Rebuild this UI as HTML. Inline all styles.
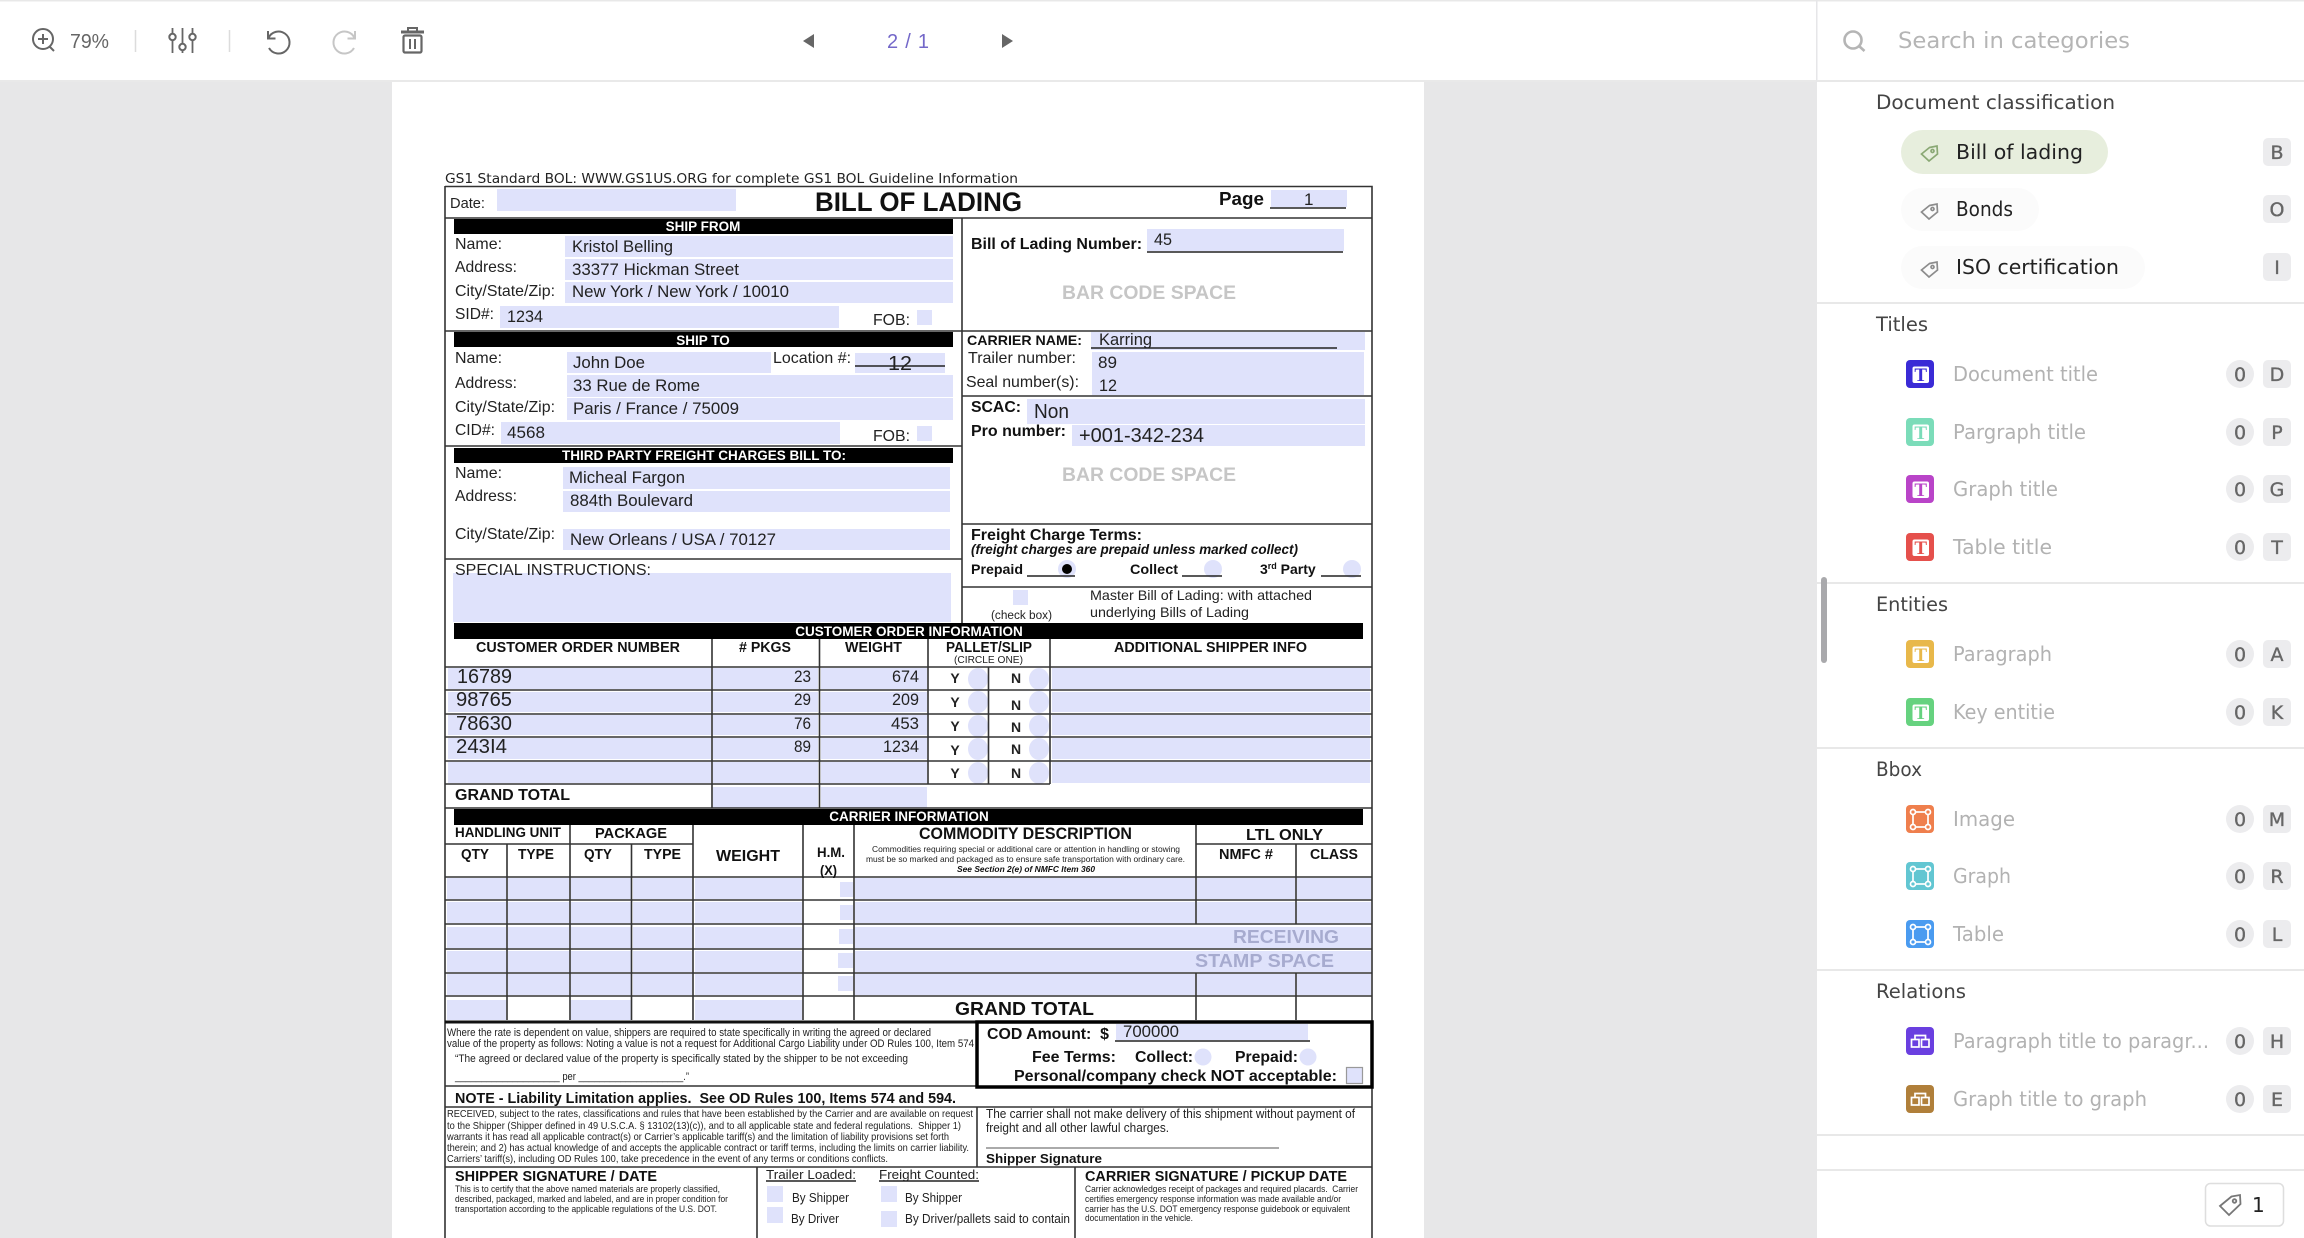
<!DOCTYPE html>
<html><head><meta charset="utf-8"><title>Bill of lading annotation</title>
<style>
html,body{margin:0;padding:0;background:#fff;width:2304px;height:1238px;overflow:hidden}
svg{display:block}
text{font-family:"Liberation Sans",sans-serif;fill:#222}
.b{font-weight:700;fill:#111}
.s{font-family:"DejaVu Sans",sans-serif}
.h{font-size:19.5px;fill:#444}
.m{font-size:20px;fill:#b2b2b2}
.p{font-size:20.5px;fill:#222}
.k{font-size:19px;fill:#666;text-anchor:middle;stroke:#666;stroke-width:.35}
.f{fill:#dfe2fb}
.c{fill:#ececee}
.l{stroke:#333;stroke-width:1.6;fill:none}
.t{font-family:"Liberation Serif",serif;font-weight:700;font-size:19px;text-anchor:middle}
</style></head><body>
<svg width="2304" height="1238" viewBox="0 0 2304 1238" xmlns="http://www.w3.org/2000/svg">
<rect width="2304" height="1238" fill="#e7e7e8"/>
<rect y="0" width="2304" height="81" fill="#fff"/>
<rect y="0" width="2304" height="1.5" fill="#e8e8e8"/>
<rect y="80" width="2304" height="2" fill="#e9e9e9"/>
<rect x="392" y="82" width="1032" height="1156" fill="#fff"/>

<!-- toolbar -->
<g fill="none" stroke="#666" stroke-width="2">
<circle cx="43" cy="39" r="10"/><path d="M38 39h10M43 34v10M49.500 46.500L54 51"/>
<path d="M172.500 28v25M182.500 28v25M192.500 28v25" stroke-width="1.800"/>
<circle cx="172.500" cy="37" r="3.200" fill="#fff"/><circle cx="182.500" cy="47" r="3.200" fill="#fff"/><circle cx="192.500" cy="37" r="3.200" fill="#fff"/>
<path d="M268 31v7.500h7.500M268.500 38A11 11 0 1 1 269 48"/>
<path d="M355 31v7.500h-7.500M354.500 38A11 11 0 1 0 354 48" stroke="#c6c6c6"/>
<path d="M401 32h23" stroke-width="3"/><path d="M408 31v-3h9v3" stroke-width="2"/>
<rect x="403.500" y="35.500" width="18" height="17" rx="1.500" stroke-width="2.200"/><path d="M410 39v10M415 39v10"/>
</g>
<path d="M135.500 30v22M229.500 30v22" stroke="#dcdcdc" stroke-width="1.500"/>
<text x="70" y="48" font-size="20" textLength="39" lengthAdjust="spacingAndGlyphs" style="fill:#666">79%</text>
<polygon points="814,34 814,48 803,41" fill="#666"/>
<polygon points="1002,34 1002,48 1013,41" fill="#666"/>
<text x="887" y="48" font-size="20" textLength="42" lengthAdjust="spacing" style="fill:#7468c9">2 / 1</text>

<!-- document fields -->
<g class="f">
<rect x="497" y="189" width="239" height="22"/><rect x="1271" y="190" width="76" height="17"/>
<rect x="565" y="236" width="388" height="21"/><rect x="565" y="259" width="388" height="21"/><rect x="565" y="282" width="388" height="21"/>
<rect x="500" y="306" width="339" height="22"/><rect x="917" y="310" width="15" height="15"/>
<rect x="567" y="352" width="204" height="21"/><rect x="855" y="353" width="90" height="20"/>
<rect x="567" y="375" width="386" height="22"/><rect x="567" y="398" width="386" height="22"/>
<rect x="501" y="422" width="339" height="22"/><rect x="917" y="426" width="15" height="15"/>
<rect x="563" y="467" width="387" height="22"/><rect x="563" y="491" width="387" height="21"/><rect x="563" y="529" width="387" height="21"/>
<rect x="453" y="573" width="498" height="49"/>
<rect x="1147" y="229" width="197" height="22"/><rect x="1091" y="332" width="274" height="18"/><rect x="1092" y="352" width="272" height="43"/>
<rect x="1027" y="399" width="338" height="25"/><rect x="1072" y="425" width="293" height="21"/>
<circle cx="1067" cy="569" r="9"/><circle cx="1213" cy="569" r="9"/><circle cx="1352" cy="569" r="9"/>
<rect x="1013" y="590" width="15" height="15"/>
</g>
<!-- order table fields -->
<g class="f">
<rect x="448" y="668" width="263" height="21"/><rect x="713" y="668" width="105" height="21"/><rect x="821" y="668" width="106" height="21"/><rect x="1052" y="668" width="318" height="21"/>
<rect x="448" y="692" width="263" height="20"/><rect x="713" y="692" width="105" height="20"/><rect x="821" y="692" width="106" height="20"/><rect x="1052" y="692" width="318" height="20"/>
<rect x="448" y="715" width="263" height="20"/><rect x="713" y="715" width="105" height="20"/><rect x="821" y="715" width="106" height="20"/><rect x="1052" y="715" width="318" height="20"/>
<rect x="448" y="738" width="263" height="21"/><rect x="713" y="738" width="105" height="21"/><rect x="821" y="738" width="106" height="21"/><rect x="1052" y="738" width="318" height="21"/>
<rect x="448" y="762" width="263" height="21"/><rect x="713" y="762" width="105" height="21"/><rect x="821" y="762" width="106" height="21"/><rect x="1052" y="762" width="318" height="21"/>
<rect x="713" y="787" width="105" height="21"/><rect x="821" y="787" width="106" height="21"/>
<ellipse cx="978" cy="679" rx="10" ry="11"/><ellipse cx="1039" cy="679" rx="10" ry="11"/>
<ellipse cx="978" cy="702" rx="10" ry="11"/><ellipse cx="1039" cy="702" rx="10" ry="11"/>
<ellipse cx="978" cy="726" rx="10" ry="11"/><ellipse cx="1039" cy="726" rx="10" ry="11"/>
<ellipse cx="978" cy="749" rx="10" ry="11"/><ellipse cx="1039" cy="749" rx="10" ry="11"/>
<ellipse cx="978" cy="773" rx="10" ry="11"/><ellipse cx="1039" cy="773" rx="10" ry="11"/>
</g>
<!-- carrier fields -->
<g class="f">
<path d="M447 878h59v21h-59zM508 878h61v21h-61zM571 878h60v21h-60zM633 878h59v21h-59zM695 878h107v21h-107zM840 882h13v15h-13zM855 878h340v21h-340zM1197 878h98v21h-98zM1297 878h74v21h-74z"/>
<path d="M447 902h59v21h-59zM508 902h61v21h-61zM571 902h60v21h-60zM633 902h59v21h-59zM695 902h107v21h-107zM840 905h13v15h-13zM855 902h340v21h-340zM1197 902h98v21h-98zM1297 902h74v21h-74z"/>
<path d="M447 927h59v21h-59zM508 927h61v21h-61zM571 927h60v21h-60zM633 927h59v21h-59zM695 927h107v21h-107zM839 929h14v15h-14zM855 927h516v21h-516z"/>
<path d="M447 951h59v21h-59zM508 951h61v21h-61zM571 951h60v21h-60zM633 951h59v21h-59zM695 951h107v21h-107zM838 953h15v15h-15zM855 951h516v21h-516z"/>
<path d="M447 974h59v21h-59zM508 974h61v21h-61zM571 974h60v21h-60zM633 974h59v21h-59zM695 974h107v21h-107zM838 976h15v15h-15zM855 974h340v21h-340zM1197 974h98v21h-98zM1297 974h74v21h-74z"/>
<path d="M447 1000h59v20h-59zM571 1000h60v20h-60zM695 1000h107v20h-107z"/>
<rect x="1116" y="1024" width="192" height="16"/>
<circle cx="1203" cy="1057" r="8.500"/><circle cx="1308" cy="1057" r="8.500"/>
<rect x="767" y="1186" width="16" height="16"/><rect x="767" y="1207" width="16" height="16"/><rect x="881" y="1186" width="16" height="16"/><rect x="881" y="1211" width="16" height="16"/>
</g>

<!-- black bars -->
<g fill="#000">
<rect x="454" y="219" width="499" height="15"/><rect x="454" y="332" width="499" height="15"/><rect x="454" y="448" width="499" height="15"/>
<rect x="454" y="623" width="909" height="16"/><rect x="454" y="809" width="909" height="16"/>
</g>

<!-- document lines -->
<path class="l" d="M445 186.500H1372V1238M445 186V1238M445 218H1372M962 218V623M445 331H1372M445 446H962M445 559H962M962 396H1372M962 524H1372M962 587H1372"/>
<path class="l" d="M712 639V808M819.500 639V808M928 639V784M988.500 667V784M1050 639V784M445 667H1372M445 690H1372M445 714H1372M445 737H1372M445 761H1372M445 784H1050M445 808H1372"/>
<path class="l" d="M507 844V1020M570 825V1020M631.500 844V1020M693 825V1020M803 825V1020M854 825V1020M1196 825V924M1296 844V924M1196 973V1020M1296 973V1020M445 844H693M1196 844H1372M445 877H1372M445 900H1372M445 924H1372M445 949H1372M445 973H1372M445 996H1372"/>
<path d="M445 1022H977" stroke="#111" stroke-width="3"/>
<path class="l" d="M445 1086H977M445 1107H1372M977 1107V1167M445 1167H1372M757 1167V1238M1075 1167V1238"/>
<path d="M986 1148H1279" stroke="#555" stroke-width="1"/>
<rect x="977" y="1022" width="395" height="65" fill="none" stroke="#000" stroke-width="3.500"/>
<rect x="1346.500" y="1067.500" width="16" height="16" fill="#dfe2fb" stroke="#999" stroke-width="1.200"/>
<path stroke="#222" stroke-width="1.600" fill="none" d="M1270 208H1346M1147 252H1343M855 366H945M1091 348H1337M1027 576H1075M1182 576H1222M1321 576H1361M1115 1041H1310M766 1181H856M879 1181H979"/>
<circle cx="1067" cy="569" r="5" fill="#000"/>

<!-- document text -->
<text class="s" x="445" y="183" font-size="13.500" textLength="573" lengthAdjust="spacingAndGlyphs" style="fill:#222">GS1 Standard BOL: WWW.GS1US.ORG for complete GS1 BOL Guideline Information</text>
<text x="450" y="208" font-size="14.500" textLength="35" lengthAdjust="spacingAndGlyphs">Date:</text>
<text class="b" x="815" y="211" font-size="26.500" textLength="207" lengthAdjust="spacingAndGlyphs">BILL OF LADING</text>
<text class="b" x="1219" y="205" font-size="18.500" textLength="45" lengthAdjust="spacingAndGlyphs">Page</text>
<text x="1304" y="205" font-size="17">1</text>
<g font-weight="700" font-size="13.500" style="text-anchor:middle">
<text x="703" y="231" style="fill:#fff">SHIP FROM</text>
<text x="703" y="345" style="fill:#fff">SHIP TO</text>
<text x="704" y="460" style="fill:#fff">THIRD PARTY FREIGHT CHARGES BILL TO:</text>
<text x="909" y="636" style="fill:#fff">CUSTOMER ORDER INFORMATION</text>
<text x="909" y="821" style="fill:#fff">CARRIER INFORMATION</text>
</g>
<g font-size="16">
<text x="455" y="249" textLength="47" lengthAdjust="spacingAndGlyphs">Name:</text>
<text x="455" y="272" textLength="62" lengthAdjust="spacingAndGlyphs">Address:</text>
<text x="455" y="296" textLength="100" lengthAdjust="spacingAndGlyphs">City/State/Zip:</text>
<text x="455" y="319" textLength="39" lengthAdjust="spacingAndGlyphs">SID#:</text>
<text x="873" y="325" textLength="37" lengthAdjust="spacingAndGlyphs">FOB:</text>
<text x="455" y="363" textLength="47" lengthAdjust="spacingAndGlyphs">Name:</text>
<text x="773" y="363" textLength="78" lengthAdjust="spacingAndGlyphs">Location #:</text>
<text x="455" y="388" textLength="62" lengthAdjust="spacingAndGlyphs">Address:</text>
<text x="455" y="412" textLength="100" lengthAdjust="spacingAndGlyphs">City/State/Zip:</text>
<text x="455" y="435" textLength="40" lengthAdjust="spacingAndGlyphs">CID#:</text>
<text x="873" y="441" textLength="37" lengthAdjust="spacingAndGlyphs">FOB:</text>
<text x="455" y="478" textLength="47" lengthAdjust="spacingAndGlyphs">Name:</text>
<text x="455" y="501" textLength="62" lengthAdjust="spacingAndGlyphs">Address:</text>
<text x="455" y="539" textLength="100" lengthAdjust="spacingAndGlyphs">City/State/Zip:</text>
<text x="455" y="575" textLength="196" lengthAdjust="spacingAndGlyphs">SPECIAL INSTRUCTIONS:</text>
<text x="968" y="363" textLength="108" lengthAdjust="spacingAndGlyphs">Trailer number:</text>
<text x="966" y="387" textLength="113" lengthAdjust="spacingAndGlyphs">Seal number(s):</text>
</g>
<g font-size="17">
<text x="572" y="252" textLength="101" lengthAdjust="spacingAndGlyphs">Kristol Belling</text>
<text x="572" y="275" textLength="167" lengthAdjust="spacingAndGlyphs">33377 Hickman Street</text>
<text x="572" y="297" textLength="217" lengthAdjust="spacingAndGlyphs">New York / New York / 10010</text>
<text x="507" y="322" textLength="36" lengthAdjust="spacingAndGlyphs">1234</text>
<text x="573" y="368" textLength="72" lengthAdjust="spacingAndGlyphs">John Doe</text>
<text x="888" y="370" font-size="20" textLength="24" lengthAdjust="spacingAndGlyphs">12</text>
<text x="573" y="391" textLength="127" lengthAdjust="spacingAndGlyphs">33 Rue de Rome</text>
<text x="573" y="414" textLength="166" lengthAdjust="spacingAndGlyphs">Paris / France / 75009</text>
<text x="507" y="438" textLength="38" lengthAdjust="spacingAndGlyphs">4568</text>
<text x="569" y="483" textLength="116" lengthAdjust="spacingAndGlyphs">Micheal Fargon</text>
<text x="570" y="506" textLength="123" lengthAdjust="spacingAndGlyphs">884th Boulevard</text>
<text x="570" y="545" textLength="206" lengthAdjust="spacingAndGlyphs">New Orleans / USA / 70127</text>
<text x="1154" y="245" textLength="18" lengthAdjust="spacingAndGlyphs">45</text>
<text x="1099" y="345" textLength="53" lengthAdjust="spacingAndGlyphs">Karring</text>
<text x="1098" y="368" textLength="19" lengthAdjust="spacingAndGlyphs">89</text>
<text x="1099" y="391" textLength="18" lengthAdjust="spacingAndGlyphs">12</text>
<text x="1034" y="418" font-size="20" textLength="35" lengthAdjust="spacingAndGlyphs">Non</text>
<text x="1079" y="442" font-size="20" textLength="125" lengthAdjust="spacingAndGlyphs">+001-342-234</text>
<text x="1123" y="1037" textLength="56" lengthAdjust="spacingAndGlyphs">700000</text>
</g>
<g class="b" font-weight="700">
<text class="b" x="971" y="249" font-size="16" textLength="171" lengthAdjust="spacingAndGlyphs">Bill of Lading Number:</text>
<text class="b" x="967" y="345" font-size="14" textLength="115" lengthAdjust="spacingAndGlyphs">CARRIER NAME:</text>
<text class="b" x="971" y="412" font-size="16" textLength="50" lengthAdjust="spacingAndGlyphs">SCAC:</text>
<text class="b" x="971" y="436" font-size="16" textLength="95" lengthAdjust="spacingAndGlyphs">Pro number:</text>
<text class="b" x="971" y="540" font-size="16" textLength="171" lengthAdjust="spacingAndGlyphs">Freight Charge Terms:</text>
<text class="b" x="971" y="554" font-size="13.500" font-style="italic" textLength="327" lengthAdjust="spacingAndGlyphs">(freight charges are prepaid unless marked collect)</text>
<text class="b" x="971" y="574" font-size="14" textLength="52" lengthAdjust="spacingAndGlyphs">Prepaid</text>
<text class="b" x="1130" y="574" font-size="14" textLength="48" lengthAdjust="spacingAndGlyphs">Collect</text>
<text class="b" x="1260" y="574" font-size="14">3<tspan font-size="9" dy="-5">rd</tspan><tspan dy="5"> Party</tspan></text>
<text class="b" x="1062" y="299" font-size="19" textLength="174" lengthAdjust="spacingAndGlyphs" style="fill:#c6c6c6">BAR CODE SPACE</text>
<text class="b" x="1062" y="481" font-size="19" textLength="174" lengthAdjust="spacingAndGlyphs" style="fill:#c6c6c6">BAR CODE SPACE</text>
</g>
<text x="991" y="619" font-size="11.500" textLength="61" lengthAdjust="spacingAndGlyphs">(check box)</text>
<text x="1090" y="600" font-size="14" textLength="222" lengthAdjust="spacingAndGlyphs">Master Bill of Lading: with attached</text>
<text x="1090" y="617" font-size="14" textLength="159" lengthAdjust="spacingAndGlyphs">underlying Bills of Lading</text>

<!-- order table text -->
<g class="b">
<text class="b" x="476" y="652" font-size="14.500" textLength="204" lengthAdjust="spacingAndGlyphs">CUSTOMER ORDER NUMBER</text>
<text class="b" x="739" y="652" font-size="14.500" textLength="52" lengthAdjust="spacingAndGlyphs"># PKGS</text>
<text class="b" x="845" y="652" font-size="14.500" textLength="57" lengthAdjust="spacingAndGlyphs">WEIGHT</text>
<text class="b" x="946" y="652" font-size="14.500" textLength="86" lengthAdjust="spacingAndGlyphs">PALLET/SLIP</text>
<text class="b" x="1114" y="652" font-size="14.500" textLength="193" lengthAdjust="spacingAndGlyphs">ADDITIONAL SHIPPER INFO</text>
<text class="b" x="455" y="800" font-size="16" textLength="115" lengthAdjust="spacingAndGlyphs">GRAND TOTAL</text>
</g>
<text x="954" y="663" font-size="10" textLength="69" lengthAdjust="spacingAndGlyphs">(CIRCLE ONE)</text>
<g font-size="20">
<text x="457" y="683" textLength="55" lengthAdjust="spacingAndGlyphs">16789</text>
<text x="456" y="706" textLength="56" lengthAdjust="spacingAndGlyphs">98765</text>
<text x="456" y="730" textLength="56" lengthAdjust="spacingAndGlyphs">78630</text>
<text x="456" y="753" textLength="51" lengthAdjust="spacingAndGlyphs">243I4</text>
</g>
<g font-size="16.500" style="text-anchor:end">
<text x="811" y="682" textLength="17" lengthAdjust="spacingAndGlyphs">23</text><text x="811" y="705" textLength="17" lengthAdjust="spacingAndGlyphs">29</text><text x="811" y="729" textLength="17" lengthAdjust="spacingAndGlyphs">76</text><text x="811" y="752" textLength="17" lengthAdjust="spacingAndGlyphs">89</text>
<text x="919" y="682" textLength="27" lengthAdjust="spacingAndGlyphs">674</text><text x="919" y="705" textLength="27" lengthAdjust="spacingAndGlyphs">209</text><text x="919" y="729" textLength="28" lengthAdjust="spacingAndGlyphs">453</text><text x="919" y="752" textLength="36" lengthAdjust="spacingAndGlyphs">1234</text>
</g>
<g font-size="14" font-weight="700" style="text-anchor:middle">
<text x="955" y="683">Y</text><text x="1016" y="683">N</text>
<text x="955" y="707">Y</text><text x="1016" y="710">N</text>
<text x="955" y="731">Y</text><text x="1016" y="732">N</text>
<text x="955" y="755">Y</text><text x="1016" y="754">N</text>
<text x="955" y="778">Y</text><text x="1016" y="778">N</text>
</g>

<!-- carrier text -->
<g>
<text class="b" x="455" y="837" font-size="14" textLength="106" lengthAdjust="spacingAndGlyphs">HANDLING UNIT</text>
<text class="b" x="595" y="838" font-size="15" textLength="72" lengthAdjust="spacingAndGlyphs">PACKAGE</text>
<text class="b" x="919" y="839" font-size="16.500" textLength="213" lengthAdjust="spacingAndGlyphs">COMMODITY DESCRIPTION</text>
<text class="b" x="1246" y="840" font-size="16" textLength="77" lengthAdjust="spacingAndGlyphs">LTL ONLY</text>
<text class="b" x="461" y="859" font-size="14.500" textLength="28" lengthAdjust="spacingAndGlyphs">QTY</text>
<text class="b" x="518" y="859" font-size="14.500" textLength="36" lengthAdjust="spacingAndGlyphs">TYPE</text>
<text class="b" x="584" y="859" font-size="14.500" textLength="28" lengthAdjust="spacingAndGlyphs">QTY</text>
<text class="b" x="644" y="859" font-size="14.500" textLength="37" lengthAdjust="spacingAndGlyphs">TYPE</text>
<text class="b" x="716" y="861" font-size="16" textLength="64" lengthAdjust="spacingAndGlyphs">WEIGHT</text>
<text class="b" x="817" y="857" font-size="14" textLength="28" lengthAdjust="spacingAndGlyphs">H.M.</text>
<text class="b" x="820" y="875" font-size="14" textLength="17" lengthAdjust="spacingAndGlyphs">(X)</text>
<text class="b" x="1219" y="859" font-size="14.500" textLength="54" lengthAdjust="spacingAndGlyphs">NMFC #</text>
<text class="b" x="1310" y="859" font-size="14.500" textLength="48" lengthAdjust="spacingAndGlyphs">CLASS</text>
<text x="872" y="852" font-size="8.500" textLength="308" lengthAdjust="spacingAndGlyphs">Commodities requiring special or additional care or attention in handling or stowing</text>
<text x="866" y="862" font-size="8.500" textLength="319" lengthAdjust="spacingAndGlyphs">must be so marked and packaged as to ensure safe transportation with ordinary care.</text>
<text class="b" x="957" y="872" font-size="8.500" font-style="italic" textLength="138" lengthAdjust="spacingAndGlyphs">See Section 2(e) of NMFC Item 360</text>
<text class="b" x="1233" y="943" font-size="18" textLength="106" lengthAdjust="spacingAndGlyphs" style="fill:#a7abcf">RECEIVING</text>
<text class="b" x="1195" y="967" font-size="18" textLength="139" lengthAdjust="spacingAndGlyphs" style="fill:#a7abcf">STAMP SPACE</text>
<text class="b" x="955" y="1015" font-size="18.500" textLength="139" lengthAdjust="spacingAndGlyphs">GRAND TOTAL</text>
</g>

<!-- bottom text -->
<g font-size="11">
<text x="447" y="1036" textLength="484" lengthAdjust="spacingAndGlyphs">Where the rate is dependent on value, shippers are required to state specifically in writing the agreed or declared</text>
<text x="447" y="1047" textLength="527" lengthAdjust="spacingAndGlyphs">value of the property as follows: Noting a value is not a request for Additional Cargo Liability under OD Rules 100, Item 574</text>
<text x="455" y="1062" textLength="453" lengthAdjust="spacingAndGlyphs">“The agreed or declared value of the property is specifically stated by the shipper to be not exceeding</text>
<text x="455" y="1080" textLength="234" lengthAdjust="spacingAndGlyphs">____________________ per ____________________.”</text>
</g>
<g font-size="10.500">
<text x="447" y="1117" textLength="526" lengthAdjust="spacingAndGlyphs">RECEIVED, subject to the rates, classifications and rules that have been established by the Carrier and are available on request</text>
<text x="447" y="1129" textLength="514" lengthAdjust="spacingAndGlyphs">to the Shipper (Shipper defined in 49 U.S.C.A. § 13102(13)(c)), and to all applicable state and federal regulations.&#160; Shipper 1)</text>
<text x="447" y="1140" textLength="502" lengthAdjust="spacingAndGlyphs">warrants it has read all applicable contract(s) or Carrier’s applicable tariff(s) and the limitation of liability provisions set forth</text>
<text x="447" y="1151" textLength="522" lengthAdjust="spacingAndGlyphs">therein; and 2) has actual knowledge of and accepts the applicable contract or tariff terms, including the limits on carrier liability.</text>
<text x="447" y="1162" textLength="441" lengthAdjust="spacingAndGlyphs">Carriers’ tariff(s), including OD Rules 100, take precedence in the event of any terms or conditions conflicts.</text>
</g>
<text class="b" x="987" y="1039" font-size="16" textLength="122" lengthAdjust="spacingAndGlyphs">COD Amount:&#160; $</text>
<text class="b" x="1032" y="1062" font-size="16" textLength="84" lengthAdjust="spacingAndGlyphs">Fee Terms:</text>
<text class="b" x="1135" y="1062" font-size="16" textLength="58" lengthAdjust="spacingAndGlyphs">Collect:</text>
<text class="b" x="1235" y="1062" font-size="16" textLength="63" lengthAdjust="spacingAndGlyphs">Prepaid:</text>
<text class="b" x="1014" y="1081" font-size="16" textLength="323" lengthAdjust="spacingAndGlyphs">Personal/company check NOT acceptable:</text>
<text class="b" x="455" y="1103" font-size="14.500" textLength="501" lengthAdjust="spacingAndGlyphs">NOTE - Liability Limitation applies.&#160; See OD Rules 100, Items 574 and 594.</text>
<text x="986" y="1118" font-size="13" textLength="369" lengthAdjust="spacingAndGlyphs">The carrier shall not make delivery of this shipment without payment of</text>
<text x="986" y="1132" font-size="13" textLength="183" lengthAdjust="spacingAndGlyphs">freight and all other lawful charges.</text>
<text class="b" x="986" y="1163" font-size="13" textLength="116" lengthAdjust="spacingAndGlyphs">Shipper Signature</text>
<text class="b" x="455" y="1181" font-size="14.500" textLength="202" lengthAdjust="spacingAndGlyphs">SHIPPER SIGNATURE / DATE</text>
<text x="455" y="1192" font-size="9" textLength="265" lengthAdjust="spacingAndGlyphs">This is to certify that the above named materials are properly classified,</text>
<text x="455" y="1202" font-size="9" textLength="273" lengthAdjust="spacingAndGlyphs">described, packaged, marked and labeled, and are in proper condition for</text>
<text x="455" y="1212" font-size="9" textLength="262" lengthAdjust="spacingAndGlyphs">transportation according to the applicable regulations of the U.S. DOT.</text>
<text x="766" y="1179" font-size="13" textLength="90" lengthAdjust="spacingAndGlyphs">Trailer Loaded:</text>
<text x="879" y="1179" font-size="13" textLength="100" lengthAdjust="spacingAndGlyphs">Freight Counted:</text>
<text x="792" y="1202" font-size="12.500" textLength="57" lengthAdjust="spacingAndGlyphs">By Shipper</text>
<text x="791" y="1223" font-size="12.500" textLength="48" lengthAdjust="spacingAndGlyphs">By Driver</text>
<text x="905" y="1202" font-size="12.500" textLength="57" lengthAdjust="spacingAndGlyphs">By Shipper</text>
<text x="905" y="1223" font-size="12.500" textLength="165" lengthAdjust="spacingAndGlyphs">By Driver/pallets said to contain</text>
<text class="b" x="1085" y="1181" font-size="14.500" textLength="262" lengthAdjust="spacingAndGlyphs">CARRIER SIGNATURE / PICKUP DATE</text>
<text x="1085" y="1192" font-size="9" textLength="273" lengthAdjust="spacingAndGlyphs">Carrier acknowledges receipt of packages and required placards.&#160; Carrier</text>
<text x="1085" y="1202" font-size="9" textLength="256" lengthAdjust="spacingAndGlyphs">certifies emergency response information was made available and/or</text>
<text x="1085" y="1212" font-size="9" textLength="265" lengthAdjust="spacingAndGlyphs">carrier has the U.S. DOT emergency response guidebook or equivalent</text>
<text x="1085" y="1221" font-size="9" textLength="108" lengthAdjust="spacingAndGlyphs">documentation in the vehicle.</text>

<!-- sidebar -->
<rect x="1817" y="1.500" width="487" height="1236.500" fill="#fff"/>
<rect x="1816" y="0" width="1.500" height="82" fill="#e6e6e8"/>
<g fill="#e8e8e8">
<rect x="1817" y="80" width="487" height="2"/><rect x="1817" y="302" width="487" height="2"/><rect x="1817" y="582" width="487" height="2"/><rect x="1817" y="747" width="487" height="2"/><rect x="1817" y="969" width="487" height="2"/><rect x="1817" y="1134" width="487" height="2"/><rect x="1817" y="1169" width="487" height="2"/>
</g>
<rect x="1821" y="577" width="6" height="86" rx="3" fill="#a9a9ac"/>
<g fill="none" stroke="#b5b5b5" stroke-width="2.600"><circle cx="1853" cy="40" r="8.500"/><path d="M1859 46L1864.500 51"/></g>
<text class="s" x="1898" y="48" font-size="22" textLength="232" lengthAdjust="spacingAndGlyphs" style="fill:#b5b5b5">Search in categories</text>

<text class="s h" x="1876" y="109" textLength="239" lengthAdjust="spacingAndGlyphs">Document classification</text>
<rect x="1901" y="130" width="207" height="44" rx="22" fill="#e7eedd"/>
<rect x="1901" y="188" width="138" height="43" rx="21.500" fill="#fbfbfb"/>
<rect x="1901" y="246" width="244" height="43" rx="21.500" fill="#fbfbfb"/>
<g fill="none" stroke-width="1.700">
<g stroke="#8aa874"><path d="M1929.500 147.500L1937 146l.5 8-8.500 7-7.500-7z"/><circle cx="1932.500" cy="151" r="1.500"/></g>
<g stroke="#8c8c8c"><path d="M1929.500 205.500L1937 204l.5 8-8.500 7-7.500-7z"/><circle cx="1932.500" cy="209" r="1.500"/></g>
<g stroke="#8c8c8c"><path d="M1929.500 263.500L1937 262l.5 8-8.500 7-7.500-7z"/><circle cx="1932.500" cy="267" r="1.500"/></g>
</g>
<text class="s p" x="1956" y="159" textLength="127" lengthAdjust="spacingAndGlyphs">Bill of lading</text>
<text class="s p" x="1956" y="216" textLength="57" lengthAdjust="spacingAndGlyphs">Bonds</text>
<text class="s p" x="1956" y="274" textLength="163" lengthAdjust="spacingAndGlyphs">ISO certification</text>
<rect class="c" x="2263" y="138" width="28" height="28" rx="5"/><text class="s k" x="2277" y="159">B</text>
<rect class="c" x="2263" y="195" width="28" height="28" rx="5"/><text class="s k" x="2277" y="216">O</text>
<rect class="c" x="2263" y="253" width="28" height="28" rx="5"/><text class="s k" x="2277" y="274">I</text>

<text class="s h" x="1876" y="331" textLength="52" lengthAdjust="spacingAndGlyphs">Titles</text>
<text class="s h" x="1876" y="611" textLength="72" lengthAdjust="spacingAndGlyphs">Entities</text>
<text class="s h" x="1876" y="776" textLength="46" lengthAdjust="spacingAndGlyphs">Bbox</text>
<text class="s h" x="1876" y="998" textLength="90" lengthAdjust="spacingAndGlyphs">Relations</text>

<!-- T rows -->
<g transform="translate(1906,360)"><rect width="28" height="28" rx="4" fill="#3a2bd6"/><rect x="6.500" y="6.500" width="16.500" height="16.500" rx="2" fill="#fff"/><text class="t" x="14.700" y="21" style="fill:#3a2bd6">T</text></g>
<g transform="translate(1906,418)"><rect width="28" height="28" rx="4" fill="#7bdcb9"/><rect x="6.500" y="6.500" width="16.500" height="16.500" rx="2" fill="#fff"/><text class="t" x="14.700" y="21" style="fill:#7bdcb9">T</text></g>
<g transform="translate(1906,475)"><rect width="28" height="28" rx="4" fill="#b944c8"/><rect x="6.500" y="6.500" width="16.500" height="16.500" rx="2" fill="#fff"/><text class="t" x="14.700" y="21" style="fill:#b944c8">T</text></g>
<g transform="translate(1906,533)"><rect width="28" height="28" rx="4" fill="#e5504c"/><rect x="6.500" y="6.500" width="16.500" height="16.500" rx="2" fill="#fff"/><text class="t" x="14.700" y="21" style="fill:#e5504c">T</text></g>
<g transform="translate(1906,640)"><rect width="28" height="28" rx="4" fill="#e8b84a"/><rect x="6.500" y="6.500" width="16.500" height="16.500" rx="2" fill="#fff"/><text class="t" x="14.700" y="21" style="fill:#e8b84a">T</text></g>
<g transform="translate(1906,698)"><rect width="28" height="28" rx="4" fill="#66d27f"/><rect x="6.500" y="6.500" width="16.500" height="16.500" rx="2" fill="#fff"/><text class="t" x="14.700" y="21" style="fill:#66d27f">T</text></g>

<!-- bbox icons -->
<g transform="translate(1906,805)"><rect width="28" height="28" rx="4" fill="#ef7f4d"/><g fill="#ef7f4d" stroke="#fff" stroke-width="1.700"><rect x="7" y="7" width="15" height="15" fill="none"/><circle cx="7" cy="7" r="2.500"/><circle cx="22" cy="7" r="2.500"/><circle cx="7" cy="22" r="2.500"/><circle cx="22" cy="22" r="2.500"/></g></g>
<g transform="translate(1906,862)"><rect width="28" height="28" rx="4" fill="#62c6d2"/><g fill="#62c6d2" stroke="#fff" stroke-width="1.700"><rect x="7" y="7" width="15" height="15" fill="none"/><circle cx="7" cy="7" r="2.500"/><circle cx="22" cy="7" r="2.500"/><circle cx="7" cy="22" r="2.500"/><circle cx="22" cy="22" r="2.500"/></g></g>
<g transform="translate(1906,920)"><rect width="28" height="28" rx="4" fill="#4a9bf0"/><g fill="#4a9bf0" stroke="#fff" stroke-width="1.700"><rect x="7" y="7" width="15" height="15" fill="none"/><circle cx="7" cy="7" r="2.500"/><circle cx="22" cy="7" r="2.500"/><circle cx="7" cy="22" r="2.500"/><circle cx="22" cy="22" r="2.500"/></g></g>

<!-- relation icons -->
<g transform="translate(1906,1027)"><rect width="28" height="28" rx="4" fill="#6a3fe0"/><g fill="none" stroke="#fff" stroke-width="1.700"><rect x="5.500" y="12.500" width="7.500" height="7.500"/><rect x="15.500" y="12.500" width="7.500" height="7.500"/><path d="M9 12.500V8.500H19.500V12.500"/></g></g>
<g transform="translate(1906,1085)"><rect width="28" height="28" rx="4" fill="#b07f3a"/><g fill="none" stroke="#fff" stroke-width="1.700"><rect x="5.500" y="12.500" width="7.500" height="7.500"/><rect x="15.500" y="12.500" width="7.500" height="7.500"/><path d="M9 12.500V8.500H19.500V12.500"/></g></g>

<!-- labels -->
<text class="s m" x="1953" y="381" textLength="145" lengthAdjust="spacingAndGlyphs">Document title</text>
<text class="s m" x="1953" y="439" textLength="133" lengthAdjust="spacingAndGlyphs">Pargraph title</text>
<text class="s m" x="1953" y="496" textLength="105" lengthAdjust="spacingAndGlyphs">Graph title</text>
<text class="s m" x="1953" y="554" textLength="99" lengthAdjust="spacingAndGlyphs">Table title</text>
<text class="s m" x="1953" y="661" textLength="99" lengthAdjust="spacingAndGlyphs">Paragraph</text>
<text class="s m" x="1953" y="719" textLength="102" lengthAdjust="spacingAndGlyphs">Key entitie</text>
<text class="s m" x="1953" y="826" textLength="62" lengthAdjust="spacingAndGlyphs">Image</text>
<text class="s m" x="1953" y="883" textLength="58" lengthAdjust="spacingAndGlyphs">Graph</text>
<text class="s m" x="1953" y="941" textLength="51" lengthAdjust="spacingAndGlyphs">Table</text>
<text class="s m" x="1953" y="1048" textLength="256" lengthAdjust="spacingAndGlyphs">Paragraph title to paragr...</text>
<text class="s m" x="1953" y="1106" textLength="194" lengthAdjust="spacingAndGlyphs">Graph title to graph</text>

<!-- counters and keys -->
<g>
<circle class="c" cx="2240" cy="374" r="14"/><rect class="c" x="2263" y="360" width="28" height="28" rx="5"/><text class="s k" x="2240" y="381">0</text><text class="s k" x="2277" y="381">D</text>
<circle class="c" cx="2240" cy="432" r="14"/><rect class="c" x="2263" y="418" width="28" height="28" rx="5"/><text class="s k" x="2240" y="439">0</text><text class="s k" x="2277" y="439">P</text>
<circle class="c" cx="2240" cy="489" r="14"/><rect class="c" x="2263" y="475" width="28" height="28" rx="5"/><text class="s k" x="2240" y="496">0</text><text class="s k" x="2277" y="496">G</text>
<circle class="c" cx="2240" cy="547" r="14"/><rect class="c" x="2263" y="533" width="28" height="28" rx="5"/><text class="s k" x="2240" y="554">0</text><text class="s k" x="2277" y="554">T</text>
<circle class="c" cx="2240" cy="654" r="14"/><rect class="c" x="2263" y="640" width="28" height="28" rx="5"/><text class="s k" x="2240" y="661">0</text><text class="s k" x="2277" y="661">A</text>
<circle class="c" cx="2240" cy="712" r="14"/><rect class="c" x="2263" y="698" width="28" height="28" rx="5"/><text class="s k" x="2240" y="719">0</text><text class="s k" x="2277" y="719">K</text>
<circle class="c" cx="2240" cy="819" r="14"/><rect class="c" x="2263" y="805" width="28" height="28" rx="5"/><text class="s k" x="2240" y="826">0</text><text class="s k" x="2277" y="826">M</text>
<circle class="c" cx="2240" cy="876" r="14"/><rect class="c" x="2263" y="862" width="28" height="28" rx="5"/><text class="s k" x="2240" y="883">0</text><text class="s k" x="2277" y="883">R</text>
<circle class="c" cx="2240" cy="934" r="14"/><rect class="c" x="2263" y="920" width="28" height="28" rx="5"/><text class="s k" x="2240" y="941">0</text><text class="s k" x="2277" y="941">L</text>
<circle class="c" cx="2240" cy="1041" r="14"/><rect class="c" x="2263" y="1027" width="28" height="28" rx="5"/><text class="s k" x="2240" y="1048">0</text><text class="s k" x="2277" y="1048">H</text>
<circle class="c" cx="2240" cy="1099" r="14"/><rect class="c" x="2263" y="1085" width="28" height="28" rx="5"/><text class="s k" x="2240" y="1106">0</text><text class="s k" x="2277" y="1106">E</text>
</g>

<!-- bottom button -->
<rect x="2205.500" y="1183.500" width="78" height="42.500" rx="5" fill="#fff" stroke="#dedede" stroke-width="1.500"/>
<g fill="none" stroke="#777" stroke-width="1.800"><path d="M2231.500 1196.500L2240 1195l.5 9-11.500 11-9-9z"/><circle cx="2234.500" cy="1201" r="1.800"/></g>
<text class="s" x="2252" y="1212" font-size="20" style="fill:#222">1</text>
</svg>
</body></html>
